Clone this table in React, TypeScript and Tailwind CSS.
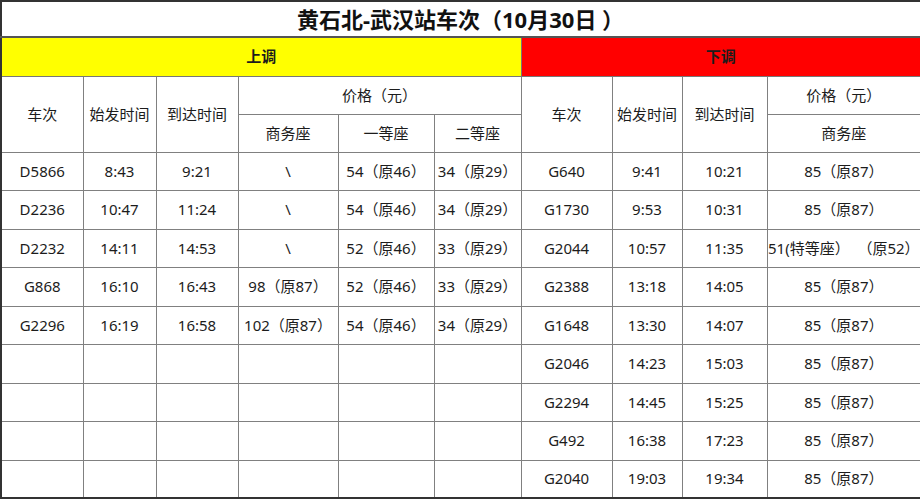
import React from 'react'

const up = [
  ['D5866', '8:43', '9:21', '\\', '54（原46）', '34（原29）'],
  ['D2236', '10:47', '11:24', '\\', '54（原46）', '34（原29）'],
  ['D2232', '14:11', '14:53', '\\', '52（原46）', '33（原29）'],
  ['G868', '16:10', '16:43', '98（原87）', '52（原46）', '33（原29）'],
  ['G2296', '16:19', '16:58', '102（原87）', '54（原46）', '34（原29）'],
]

const down = [
  ['G640', '9:41', '10:21', '85（原87）'],
  ['G1730', '9:53', '10:31', '85（原87）'],
  ['G2044', '10:57', '11:35', '51(特等座）  （原52）'],
  ['G2388', '13:18', '14:05', '85（原87）'],
  ['G1648', '13:30', '14:07', '85（原87）'],
  ['G2046', '14:23', '15:03', '85（原87）'],
  ['G2294', '14:45', '15:25', '85（原87）'],
  ['G492', '16:38', '17:23', '85（原87）'],
  ['G2040', '19:03', '19:34', '85（原87）'],
]

const rowH = ['h-[38px]', 'h-[39px]', 'h-[38px]', 'h-[39px]', 'h-[38px]', 'h-[39px]', 'h-[38px]', 'h-[39px]', 'h-[38px]']

const cell = 'border border-[#808080] text-center align-middle p-0 whitespace-pre'

export default function App() {
  return (
    <div className="w-[920px] h-[500px] bg-white text-[#1c1c1c] font-['Noto_Sans','Noto_Sans_CJK_SC',sans-serif]">
      <table className="w-[920px] table-fixed border-collapse border-2 border-[#333] text-[15px] leading-none">
        <colgroup>
          <col className="w-[82px]" />
          <col className="w-[73px]" />
          <col className="w-[82px]" />
          <col className="w-[100px]" />
          <col className="w-[96px]" />
          <col className="w-[87px]" />
          <col className="w-[91px]" />
          <col className="w-[70px]" />
          <col className="w-[85px]" />
          <col className="w-[154px]" />
        </colgroup>
        <tbody>
          {/* Title */}
          <tr className="h-[36px]">
            <td colSpan={10} className="border-b-2 border-[#555] text-center align-middle font-bold text-[22px] text-[#111] pr-[1px]">
              黄石北-武汉站车次（10月30日 ）
            </td>
          </tr>
          {/* Direction bands */}
          <tr className="h-[39px]">
            <td colSpan={6} className="bg-[#ffff00] border border-[#777] text-center align-middle font-bold">上调</td>
            <td colSpan={4} className="bg-[#ff0000] border border-[#777] text-center align-middle font-bold">下调</td>
          </tr>
          {/* Headers */}
          <tr className="h-[38px]">
            <td rowSpan={2} className={cell}>车次</td>
            <td rowSpan={2} className={cell}>始发时间</td>
            <td rowSpan={2} className={cell}>到达时间</td>
            <td colSpan={3} className={cell}>价格（元）</td>
            <td rowSpan={2} className={cell}>车次</td>
            <td rowSpan={2} className={cell}>始发时间</td>
            <td rowSpan={2} className={cell}>到达时间</td>
            <td className={cell}>价格（元）</td>
          </tr>
          <tr className="h-[38px]">
            <td className={cell}>商务座</td>
            <td className={cell}>一等座</td>
            <td className={cell}>二等座</td>
            <td className={cell}>商务座</td>
          </tr>
          {down.map((d, i) => {
            const u = up[i] || ['', '', '', '', '', '']
            return (
              <tr key={d[0]} className={rowH[i]}>
                {u.map((v, j) => (
                  <td key={'u' + j} className={cell}>{v}</td>
                ))}
                {d.map((v, j) => (
                  <td key={'d' + j} className={cell}>{v}</td>
                ))}
              </tr>
            )
          })}
        </tbody>
      </table>
    </div>
  )
}
